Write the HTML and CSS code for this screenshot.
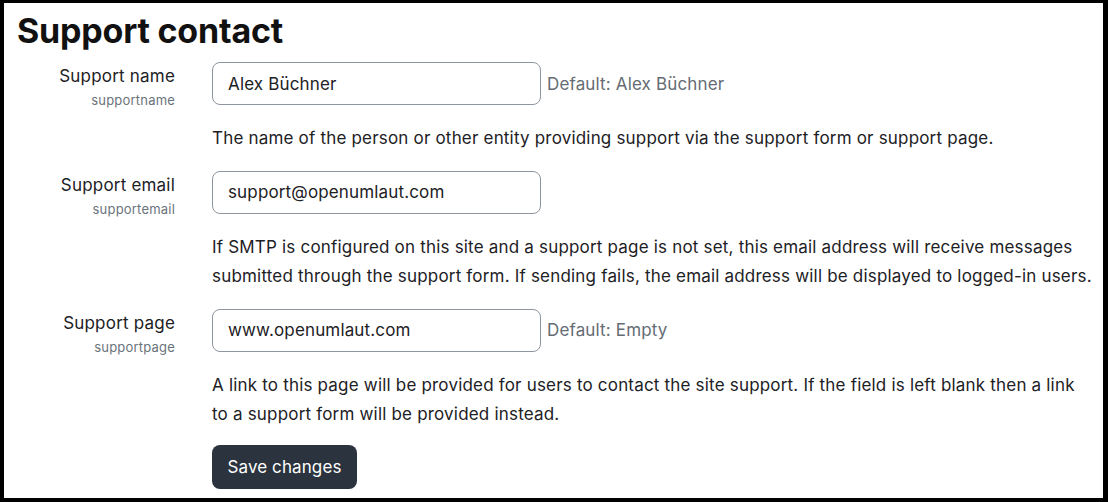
FILE: index.html
```html
<!DOCTYPE html>
<html>
<head>
<meta charset="utf-8">
<link rel="stylesheet" href="styles.css">
</head>
<body>
<div class="frame">
  <h2 class="title">Support contact</h2>
  <div class="settings">
    <div class="setting">
      <div class="label-cell">
        <div class="label">Support name</div>
        <div class="sublabel">supportname</div>
      </div>
      <div class="content-cell">
        <div class="field-row">
          <div class="input">Alex Büchner</div>
          <span class="default">Default: Alex Büchner</span>
        </div>
        <p class="desc">The name of the person or other entity providing support via the support form or support page.</p>
      </div>
    </div>
    <div class="setting">
      <div class="label-cell">
        <div class="label">Support email</div>
        <div class="sublabel">supportemail</div>
      </div>
      <div class="content-cell">
        <div class="field-row">
          <div class="input">support@openumlaut.com</div>
        </div>
        <p class="desc">If SMTP is configured on this site and a support page is not set, this email address will receive messages submitted through the support form. If sending fails, the email address will be displayed to logged-in users.</p>
      </div>
    </div>
    <div class="setting">
      <div class="label-cell">
        <div class="label">Support page</div>
        <div class="sublabel">supportpage</div>
      </div>
      <div class="content-cell">
        <div class="field-row">
          <div class="input">www.openumlaut.com</div>
          <span class="default">Default: Empty</span>
        </div>
        <p class="desc">A link to this page will be provided for users to contact the site support. If the field is left blank then a link to a support form will be provided instead.</p>
      </div>
    </div>
    <div class="setting actions">
      <div class="label-cell"></div>
      <div class="content-cell">
        <button class="btn">Save changes</button>
      </div>
    </div>
  </div>
</div>
</body>
</html>
```

FILE: styles.css
```css
html, body {
  margin: 0;
  padding: 0;
  background: #fff;
}
body {
  font-family: Inter, "Noto Sans", sans-serif;
  color: #1d2125;
}
.frame {
  box-sizing: border-box;
  width: 1108px;
  height: 502px;
  border-style: solid;
  border-color: #000;
  border-width: 3px 5px 4px 4px;
  padding: 0 0 0 13px;
  overflow: hidden;
}
.title {
  margin: 0;
  padding-top: 8px;
  font-size: 34px;
  font-weight: 700;
  line-height: 40px;
  letter-spacing: -0.2px;
  color: #111;
}
.settings {
  margin-top: 11px;
  display: flex;
  flex-direction: column;
  gap: 17px;
}
.setting {
  display: grid;
  grid-template-columns: 158px 1fr;
  column-gap: 37px;
}
.actions {
  margin-top: -2px;
}
.label-cell {
  text-align: right;
  padding-top: 2px;
}
.label {
  font-size: 17px;
  letter-spacing: 0.2px;
  line-height: 24px;
}
.sublabel {
  font-size: 13px;
  letter-spacing: 0.2px;
  line-height: 24px;
  color: #6a737b;
}
.field-row {
  display: flex;
  align-items: center;
  gap: 6px;
}
.input {
  box-sizing: border-box;
  width: 329px;
  height: 43px;
  border: 1px solid #8f959e;
  border-radius: 8px;
  padding: 0 15px;
  display: flex;
  align-items: center;
  font-size: 17px;
  letter-spacing: 0.15px;
  color: #1d2125;
}
.default {
  font-size: 17px;
  letter-spacing: 0.15px;
  color: #656c73;
}
.desc {
  margin: 19px 0 0;
  font-size: 17px;
  letter-spacing: 0.19px;
  line-height: 29.5px;
  padding-right: 10px;
}
.btn {
  box-sizing: border-box;
  height: 44px;
  width: 145px;
  border: none;
  border-radius: 8px;
  background: #2b343e;
  color: #fff;
  font-family: Inter, "Noto Sans", sans-serif;
  font-size: 17px;
  letter-spacing: 0.1px;
  padding: 0;
}
```
